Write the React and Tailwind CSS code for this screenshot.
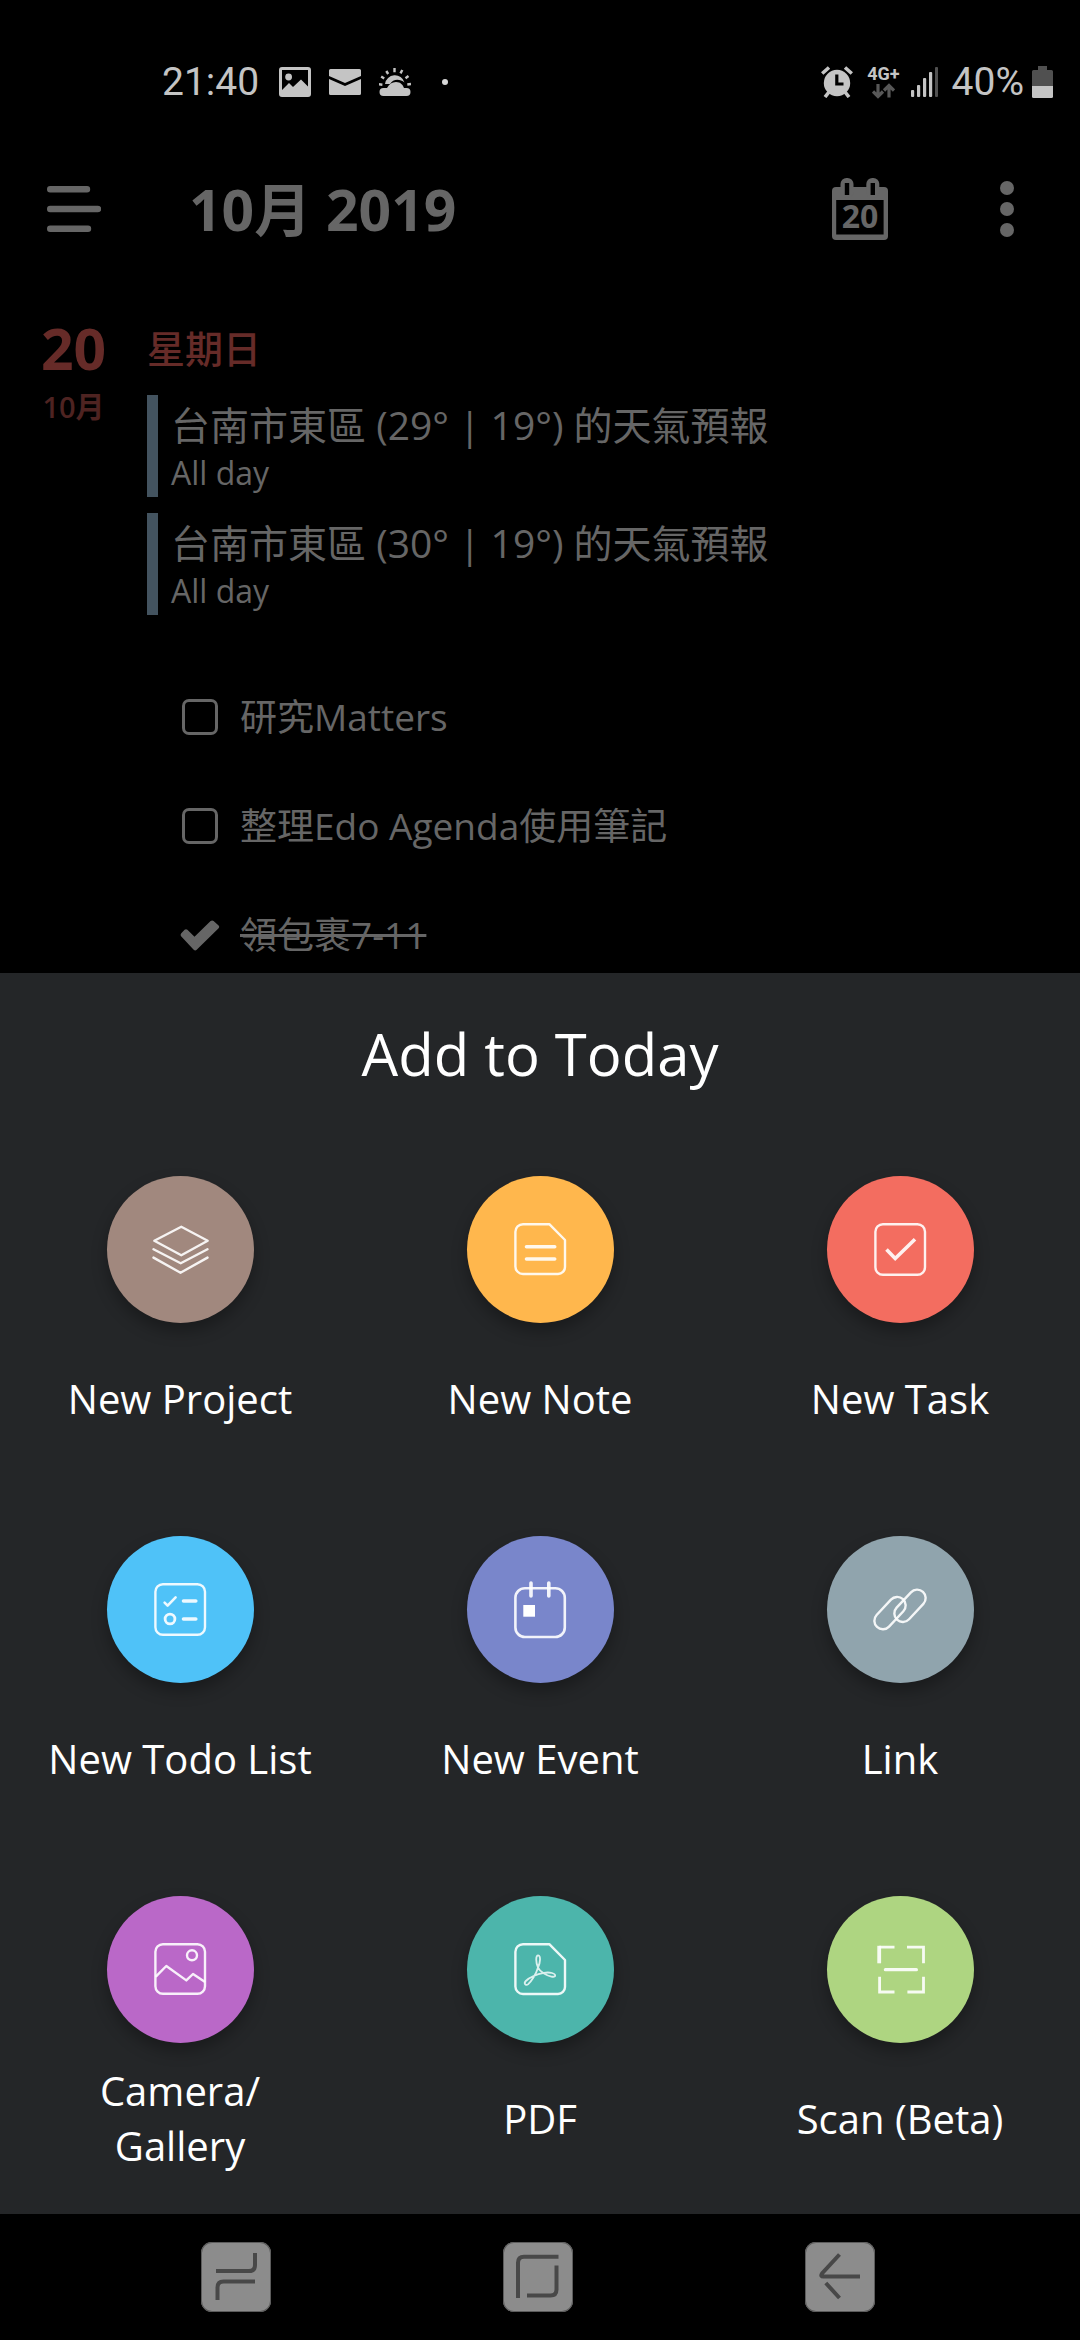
const events = [
  { title: '台南市東區 (29° | 19°) 的天氣預報', time: 'All day' },
  { title: '台南市東區 (30° | 19°) 的天氣預報', time: 'All day' },
];

const tasks = [
  { id: 'task-1', title: '研究Matters', done: false },
  { id: 'task-2', title: '整理Edo Agenda使用筆記', done: false },
  { id: 'task-3', title: '領包裹7-11', done: true },
];

const actions = [
  { label: 'New Project', color: 'bg-[#a1887e]', icon: <ProjectIcon /> },
  { label: 'New Note', color: 'bg-[#ffb74d]', icon: <NoteIcon /> },
  { label: 'New Task', color: 'bg-[#f36d60]', icon: <TaskIcon /> },
  { label: 'New Todo List', color: 'bg-[#4fc2f8]', icon: <TodoIcon /> },
  { label: 'New Event', color: 'bg-[#7986cb]', icon: <EventIcon /> },
  { label: 'Link', color: 'bg-[#90a4ad]', icon: <LinkIcon /> },
  { label: 'Camera/\nGallery', color: 'bg-[#ba68c8]', icon: <GalleryIcon /> },
  { label: 'PDF', color: 'bg-[#4cb5ab]', icon: <PdfIcon /> },
  { label: 'Scan (Beta)', color: 'bg-[#aed581]', icon: <ScanIcon /> },
];

/* Action icons share the 147px circle as their canvas */
function ActionSvg({ children }) {
  return (
    <svg
      viewBox="0 0 147 147"
      className="size-full"
      fill="none"
      stroke="white"
      strokeOpacity="0.9"
      strokeWidth="2.4"
      strokeLinecap="round"
      strokeLinejoin="round"
      aria-hidden="true"
    >
      {children}
    </svg>
  );
}

function ProjectIcon() {
  return (
    <ActionSvg>
      <path d="M74.3 50.7 100.7 64.7 74.3 79.3 47.3 64.7Z" />
      <path d="M46.5 73.3 73.7 87.2 100.5 73.3" />
      <path d="M46.5 81.6 73.5 96.7 100.5 81.6" />
    </ActionSvg>
  );
}

function NoteIcon() {
  return (
    <ActionSvg>
      <path d="M56 48.2H82.3L98 64V91a7 7 0 0 1-7 7H56a7.6 7.6 0 0 1-7.6-7.6V55.8A7.6 7.6 0 0 1 56 48.2Z" />
      <path strokeWidth="3.6" d="M59.5 70.7H87.7M59.5 83H87.7" />
    </ActionSvg>
  );
}

function TaskIcon() {
  return (
    <ActionSvg>
      <rect x="48.4" y="48.2" width="49.6" height="50.6" rx="7.5" />
      <path strokeWidth="3.6" strokeLinecap="butt" strokeLinejoin="miter" d="M59.5 73.5 68.2 82.5 88 63.2" />
    </ActionSvg>
  );
}

function TodoIcon() {
  return (
    <ActionSvg>
      <rect x="48.4" y="48.2" width="49.6" height="50.6" rx="7.5" />
      <path strokeWidth="2.6" d="M57.6 66.6 60.6 69.6 68.6 61.4" />
      <circle cx="63" cy="83" r="4.9" strokeWidth="2.8" />
      <path strokeWidth="3.6" d="M76.5 65H88.8M76.5 83H88.8" />
    </ActionSvg>
  );
}

function EventIcon() {
  return (
    <ActionSvg>
      <rect x="48.4" y="52.2" width="49.4" height="48.8" rx="9.5" strokeWidth="2.6" />
      <path strokeWidth="3.6" d="M64 47V60M81.8 47V60" />
      <rect x="56.3" y="69" width="11.7" height="11.7" fill="white" stroke="none" />
    </ActionSvg>
  );
}

function LinkIcon() {
  return (
    <ActionSvg>
      <rect x="44" y="68.6" width="38" height="17" rx="8.5" transform="rotate(-47 63 77.1)" />
      <rect x="64" y="61.3" width="38" height="17" rx="8.5" transform="rotate(-47 83 69.8)" />
    </ActionSvg>
  );
}

function GalleryIcon() {
  return (
    <ActionSvg>
      <rect x="48.4" y="48.2" width="49.6" height="49.6" rx="7.5" />
      <circle cx="85" cy="59.3" r="5" />
      <path d="M49.3 80.2 59.3 70 79.3 84.4 86 78 97.3 85.4" />
    </ActionSvg>
  );
}

function PdfIcon() {
  return (
    <ActionSvg>
      <path d="M56 48.2H82.3L98 64V91a7 7 0 0 1-7 7H56a7.6 7.6 0 0 1-7.6-7.6V55.8A7.6 7.6 0 0 1 56 48.2Z" />
      <path
        strokeWidth="1.8"
        strokeOpacity="0.8"
        d="M71 71.5C68.6 66 68.6 59.4 71.2 59.4S73.6 66 71 71.5C69.2 78 64.4 85.4 61 88.4C58.6 90.2 56.4 87.4 58.8 85C63 81 70 78 77 76.8C83 75.8 88.4 77.4 88.2 79.6C88 82 82 80.4 77 77.4C74 75.6 72 74 71 71.5Z"
      />
    </ActionSvg>
  );
}

function ScanIcon() {
  return (
    <ActionSvg>
      <g strokeWidth="2.8" strokeLinecap="butt" strokeLinejoin="miter">
        <path d="M67.5 51.2H52.2M80 51.2H96.5V67.3M52.6 80.7V96H67.5M80.4 96H96.5V80.7" />
        <path strokeWidth="3.8" d="M52.2 49.8V67.3" />
      </g>
      <path strokeWidth="3.2" d="M58.4 73.7H89.4" />
    </ActionSvg>
  );
}

function StatusBar() {
  return (
    <div className="flex h-[164px] items-center justify-between pl-[162px] pr-[27px] font-['Roboto',sans-serif] text-[39px] text-[#c4c4c4]">
      <div className="flex items-center">
        <span>21:40</span>
        {/* Picture */}
        <svg className="ml-5 h-[30px] w-8" viewBox="0 0 32 30" fill="currentColor" aria-hidden="true">
          <path fillRule="evenodd" d="M3 0H29a3 3 0 0 1 3 3V27a3 3 0 0 1-3 3H3a3 3 0 0 1-3-3V3a3 3 0 0 1 3-3ZM3 3V23L10 16 14 20 22 12.500 29 19.500V3Z" />
          <circle cx="9.600" cy="10" r="3.400" />
        </svg>
        {/* Mail */}
        <svg className="ml-[18px] h-[26px] w-8" viewBox="0 0 32 26" fill="currentColor" aria-hidden="true">
          <path d="M1.500 0H30.500A1.500 1.500 0 0 1 32 1.500V7L16 14 0 7V1.500A1.500 1.500 0 0 1 1.500 0Z" />
          <path d="M0 10 16 17 32 10V24.500A1.500 1.500 0 0 1 30.500 26H1.500A1.500 1.500 0 0 1 0 24.500Z" />
        </svg>
        {/* Weather */}
        <svg className="ml-[18px] h-7 w-8" viewBox="0 0 32 28" fill="currentColor" aria-hidden="true">
          <path d="M6 16A10 10 0 0 1 25.500 14.500C21 10.500 14 10.500 11 16Z" />
          <path d="M4.500 28A4 4 0 0 1 4.500 20H8C10 16 13 14 17 14C21.500 14 24 17 25 20H27.500A4 4 0 0 1 27.500 28Z" />
          <path
            stroke="currentColor"
            strokeWidth="2.400"
            d="M0 16.300 3.400 16.700M2.200 8.600 5.200 10.600M7.300 3 9.200 6M15.500 0V4.200M23.300 2 21.500 5.400M29.500 8 26.500 10.200M32 16 28.300 16.500"
          />
        </svg>
        <span className="ml-[31px] size-[6px] rounded-full bg-[#d8d8d8]" />
      </div>

      <div className="flex items-center">
        {/* Alarm */}
        <svg className="h-8 w-8" viewBox="0 0 32 32" aria-hidden="true">
          <g stroke="currentColor" strokeWidth="3.600">
            <path d="M1.200 7.500 8 1.500M30.800 7.500 24 1.500M8 26 4 31M24 26 28 31" />
          </g>
          <circle cx="16" cy="17" r="13.200" fill="currentColor" />
          <path d="M15.800 8.500V18H22.500" fill="none" stroke="black" strokeWidth="3.200" />
        </svg>
        {/* Network type */}
        <div className="ml-[14px] flex flex-col items-center">
          <span className="text-[18px] leading-[18px] font-bold">4G+</span>
          <svg className="h-4 w-[23px]" viewBox="0 0 23 16" fill="none" stroke="#585858" strokeWidth="3.200" aria-hidden="true">
            <path d="M6 1V13M1 8.500 6 13.500 11 8.500M17 14.500V3M12 7.500 17 2.500 22 7.500" />
          </svg>
        </div>
        {/* Signal */}
        <svg className="ml-[11px] h-[30px] w-[27px]" viewBox="0 0 27 30" fill="currentColor" aria-hidden="true">
          <rect x="0" y="23" width="3.200" height="7" rx="1" />
          <rect x="6" y="18" width="3.200" height="12" rx="1" />
          <rect x="12" y="11" width="3.200" height="19" rx="1" />
          <rect x="18" y="5" width="3.200" height="25" rx="1" />
          <rect x="24" y="0" width="3" height="30" rx="1" fill="#505050" />
        </svg>
        <span className="ml-[14px]">40%</span>
        {/* Battery */}
        <svg className="ml-2 h-8 w-[21px]" viewBox="0 0 21 32" aria-hidden="true">
          <path fill="#505050" d="M6 0H15V4H19.500A1.500 1.500 0 0 1 21 5.500V20H0V5.500A1.500 1.500 0 0 1 1.500 4H6Z" />
          <path fill="currentColor" d="M0 20H21V30.500A1.500 1.500 0 0 1 19.500 32H1.500A1.500 1.500 0 0 1 0 30.500Z" />
        </svg>
      </div>
    </div>
  );
}

function Header() {
  return (
    <header className="flex h-[90px] items-center pl-[47px] pr-[66px] text-[#666]">
      <button type="button" aria-label="Menu">
        <svg className="h-12 w-[54px]" viewBox="0 0 54 48" stroke="currentColor" strokeWidth="6.400" strokeLinecap="round" aria-hidden="true">
          <path d="M3.200 4.200H40M3.200 24H51M3.200 43.800H41" />
        </svg>
      </button>
      <h1 className="ml-[88px] flex-1 text-[57px] leading-[90px] font-bold">10月 2019</h1>
      <button type="button" aria-label="Today">
        <svg className="h-[62px] w-14" viewBox="0 0 56 62" fill="currentColor" aria-hidden="true">
          <rect x="0" y="9" width="56" height="53" rx="4" />
          <rect x="8.500" y="0" width="13" height="20" rx="6" />
          <rect x="34.300" y="0" width="13" height="20" rx="6" />
          <g fill="black">
            <rect x="4.200" y="22" width="47.400" height="34.500" />
            <rect x="12.800" y="5" width="4.400" height="12" />
            <rect x="38.600" y="5" width="4.400" height="12" />
          </g>
          <text x="28" y="50" textAnchor="middle" className="text-[32px] font-bold">20</text>
        </svg>
      </button>
      <button type="button" aria-label="More" className="ml-[112px]">
        <svg className="h-14 w-[14px]" viewBox="0 0 14 56" fill="currentColor" aria-hidden="true">
          <circle cx="7" cy="7" r="7" />
          <circle cx="7" cy="28" r="7" />
          <circle cx="7" cy="49" r="7" />
        </svg>
      </button>
    </header>
  );
}

function Agenda() {
  return (
    <main className="flex pt-16 pb-[11px] text-[#666]">
      <div className="w-[147px] text-center">
        <p className="text-[57px] leading-[60px] font-bold text-[#662b28]">20</p>
        <p className="mt-[9px] text-[29px] leading-[40px] font-semibold text-[#4e2321]">10月</p>
      </div>

      <div className="flex-1">
        <h2 className="text-[38px] leading-[60px] font-medium text-[#662b28]">星期日</h2>
        <ul className="mt-[17px] flex flex-col gap-4">
          {events.map((event) => (
            <li key={event.title} className="h-[102px] border-l-[11px] border-[#43535f] pl-[13px]">
              <p className="text-[39px] leading-[60px]">{event.title}</p>
              <p className="text-[32px] leading-[36px]">{event.time}</p>
            </li>
          ))}
        </ul>

        <ul className="mt-[75px] flex flex-col gap-[55px] pl-[35px]">
          {tasks.map((task) => (
            <li key={task.id} className="flex h-[54px] items-center">
              <span className="relative flex">
                <input
                  id={task.id}
                  type="checkbox"
                  defaultChecked={task.done}
                  className="peer size-9 appearance-none rounded-[7px] border-[3px] border-[#666] checked:border-transparent"
                />
                <svg
                  className="pointer-events-none absolute -inset-x-[2px] top-[3px] hidden h-[31px] w-10 peer-checked:block"
                  viewBox="0 0 40 31"
                  fill="currentColor"
                  aria-hidden="true"
                >
                  <path d="M1.300 13.300 4.600 9.800Q6 8.600 7.400 9.800L14.500 16.800 30.600 1Q32.200-.2 33.600 1L38.600 5.400Q39.800 6.800 38.600 8.200L16.700 29.800Q15.200 31 13.700 29.800L1.300 16.600Q0 15 1.300 13.300Z" />
                </svg>
              </span>
              <label htmlFor={task.id} className={task.done ? 'ml-[22px] text-[37px] line-through' : 'ml-[22px] text-[37px]'}>
                {task.title}
              </label>
            </li>
          ))}
        </ul>
      </div>
    </main>
  );
}

function AddSheet() {
  return (
    <section className="bg-[#242628] pt-[41px] pb-[41px] text-white">
      <h2 className="text-center text-[58px] leading-[80px]">Add to Today</h2>
      <div className="mt-[82px] grid grid-cols-3 gap-y-[83px]">
        {actions.map(({ label, color, icon }) => (
          <button key={label} type="button" className="flex flex-col items-center">
            <span className={`size-[147px] rounded-full shadow-[0_8px_16px_rgba(0,0,0,0.3)] ${color}`}>{icon}</span>
            <span className="mt-5 flex h-[110px] items-center text-[40px] leading-[55px] whitespace-pre-line">{label}</span>
          </button>
        ))}
      </div>
    </section>
  );
}

function NavButton({ label, children }) {
  return (
    <button type="button" aria-label={label} className="size-[70px] rounded-[11px] bg-[#8c8c8c] ring-1 ring-[#5c5c5c] ring-inset">
      <svg viewBox="0 0 70 70" fill="none" stroke="#484848" strokeWidth="4" aria-hidden="true">
        {children}
      </svg>
    </button>
  );
}

function NavBar() {
  return (
    <nav className="flex h-[126px] items-center justify-between pl-[201px] pr-[205px]">
      <NavButton label="Recents">
        <path d="M54 11V23Q54 29 48 29H15M54 39.500H22.500Q16.500 39.500 16.500 45.500V58" />
      </NavButton>
      <NavButton label="Home">
        <path d="M55.500 14.700H21Q15 14.700 15 20.700V56M53.500 23.500V47.500Q53.500 53.500 47.500 53.500H24" />
      </NavButton>
      <NavButton label="Back">
        <path d="M34.500 12.500 17 31.500Q15 34.500 18.500 34.500H55M20.800 41 34.500 56" />
      </NavButton>
    </nav>
  );
}

export default function App() {
  return (
    <div className="flex min-h-screen flex-col bg-black font-['Open_Sans','Noto_Sans_CJK_TC',sans-serif]">
      <StatusBar />
      <Header />
      <Agenda />
      <AddSheet />
      <NavBar />
    </div>
  );
}
